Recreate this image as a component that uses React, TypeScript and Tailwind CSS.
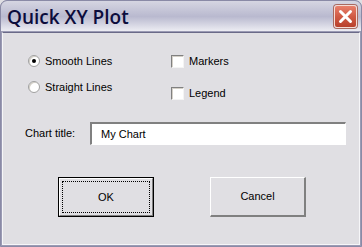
import React from 'react';

const Radio: React.FC<{ checked?: boolean; label: string }> = ({ checked, label }) => (
  <label className="flex items-center gap-[5px] h-[14px]">
    <span className="relative w-[12px] h-[12px] rounded-full bg-white border border-[#a0a0a0] shadow-[inset_1px_1px_0_#d4d0c8] flex items-center justify-center">
      {checked && <span className="w-[4px] h-[4px] rounded-full bg-black" />}
    </span>
    <span>{label}</span>
  </label>
);

const Checkbox: React.FC<{ label: string }> = ({ label }) => (
  <label className="flex items-center gap-[5px] h-[14px]">
    <span className="w-[13px] h-[13px] bg-white border-t border-l border-[#808080] border-r border-b border-r-[#f4f4f4] border-b-[#f4f4f4] shadow-[inset_1px_1px_0_#d4d0c8]" />
    <span>{label}</span>
  </label>
);

const App: React.FC = () => {
  return (
    <div className="w-[362px] h-[247px] bg-[#e0dfe3] text-[#000] font-['Liberation_Sans',sans-serif] text-[11px] overflow-hidden">
      <div className="h-full flex flex-col rounded-t-[7px] border border-[#8a8aa6] bg-[#7a7a99]">
        {/* title bar */}
        <div className="h-[31px] flex items-center justify-between pl-[6px] pr-[4px] rounded-t-[6px] bg-gradient-to-b from-[#d6d6e2] via-[#b9b9cf] to-[#f0f0f5]">
          <span className="font-['Open_Sans',sans-serif] font-semibold text-[19px] text-[#0c0c3c] leading-none mt-[1px]">
            Quick XY Plot
          </span>
          <div className="w-[23px] h-[23px] rounded-[3px] border border-[#f4dcd6] bg-gradient-to-b from-[#e8806c] via-[#d05a44] to-[#b8402c] flex items-center justify-center shadow-[0_0_0_1px_#a86a60]">
            <svg width="15" height="15" viewBox="0 0 15 15">
              <path d="M2.5 2.5 L12.5 12.5 M12.5 2.5 L2.5 12.5" stroke="#ffffff" strokeWidth="3" strokeLinecap="round" />
            </svg>
          </div>
        </div>
        {/* body */}
        <div className="flex-1 flex flex-col bg-[#e0dfe3] border-t border-[#6a6a88] ml-[1px] mr-[1px] mb-[1px] border-l border-r border-b border-l-[#f6f6f8] border-r-[#f6f6f8] border-b-[#f6f6f8] outline outline-1 outline-[#9b9bb4]">
          <div className="flex pt-[21px] text-[#000]">
            <div className="ml-[25px] w-[143px] flex flex-col gap-[12px]">
              <Radio checked label="Smooth Lines" />
              <Radio label="Straight Lines" />
            </div>
            <div className="flex flex-col gap-[18px]">
              <Checkbox label="Markers" />
              <Checkbox label="Legend" />
            </div>
          </div>
          <div className="flex items-center mt-[22px] ml-[22px]">
            <span className="w-[65px]">Chart title:</span>
            <div className="w-[256px] h-[23px] bg-white border-t-2 border-l-2 border-[#808080] border-r border-b border-r-[#ffffff] border-b-[#ffffff] flex items-center pl-[9px] pt-[1px]">
              My Chart
            </div>
          </div>
          <div className="flex mt-[32px] ml-[55px] gap-[56px]">
            <button className="w-[96px] h-[40px] border border-black bg-[#e0dfe3] p-0">
              <div className="w-full h-full border-t border-l border-[#ffffff] border-r border-b border-r-[#808080] border-b-[#808080] flex items-center justify-center p-[2px]">
                <div className="w-full h-full border border-dotted border-black flex items-center justify-center">
                  OK
                </div>
              </div>
            </button>
            <button className="w-[96px] h-[40px] bg-[#e0dfe3] border-t border-l border-[#ffffff] border-r-2 border-b-2 border-r-[#808080] border-b-[#808080] flex items-center justify-center">
              Cancel
            </button>
          </div>
        </div>
      </div>
    </div>
  );
};

export default App;
